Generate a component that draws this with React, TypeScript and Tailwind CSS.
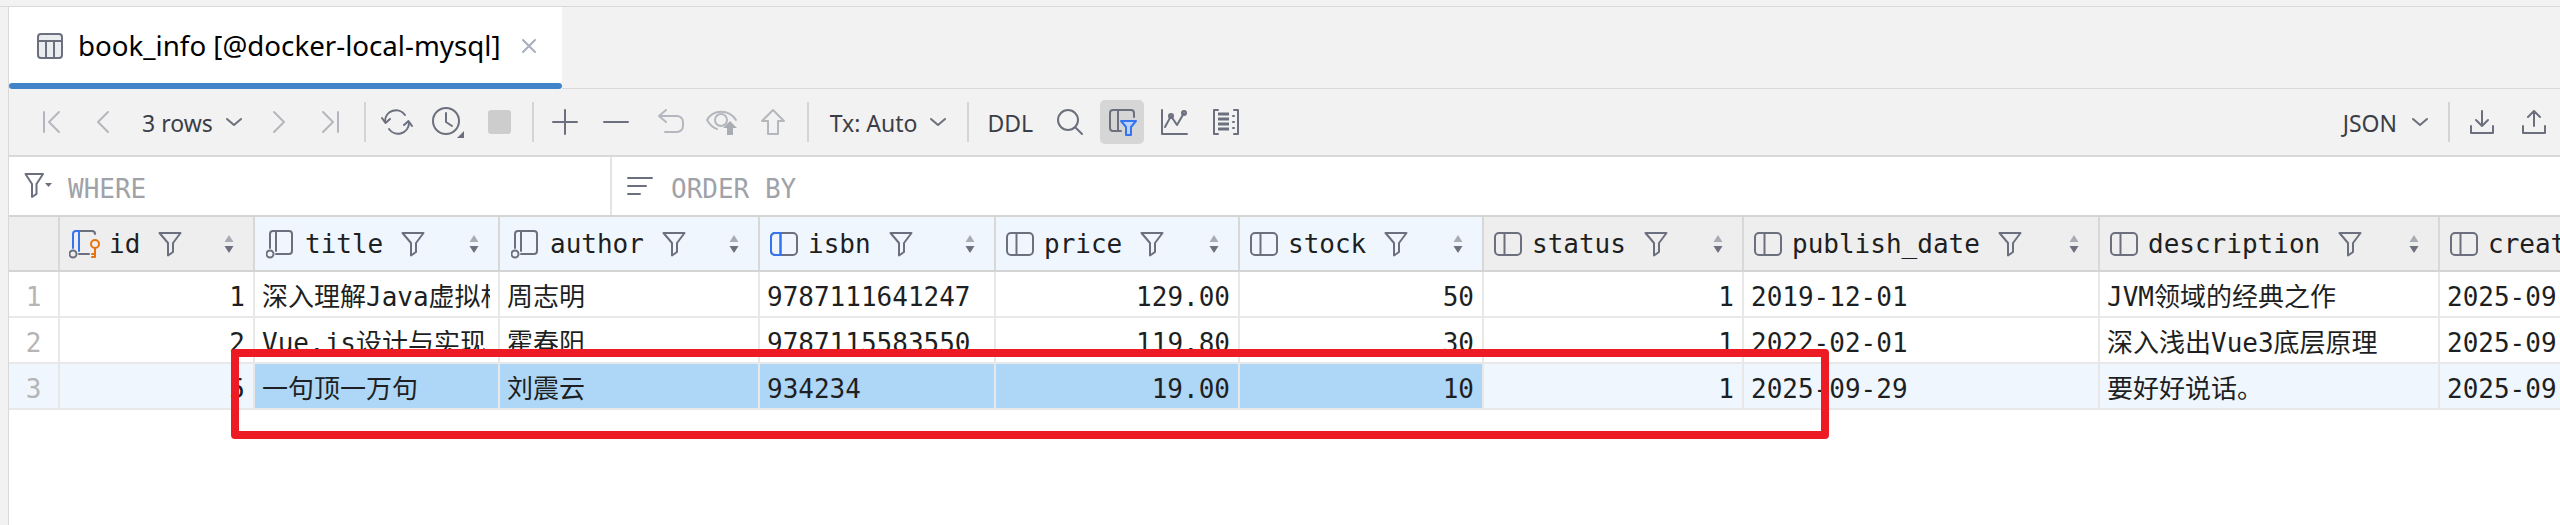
import React from 'react';

const G = '#6c707e';
const D = '#b4b7bd';
const mono = 'font-["DejaVu_Sans_Mono","Noto_Sans_CJK_SC",monospace]';

const Svg = ({ w = 28, h = 28, children }: { w?: number; h?: number; children: React.ReactNode }) => (
  <svg width={w} height={h} viewBox={`0 0 ${w} ${h}`} fill="none" strokeWidth={2} strokeLinecap="round" strokeLinejoin="round" className="shrink-0">
    {children}
  </svg>
);

const Btn = ({ children, cls = 'w-[51px]' }: { children: React.ReactNode; cls?: string }) => (
  <div className={`${cls} h-[44px] flex items-center justify-center shrink-0`}>{children}</div>
);
const Sep = ({ cls }: { cls: string }) => <div className={`w-[2px] h-[40px] bg-[#d4d4d4] shrink-0 ${cls}`} />;
const Chevron = ({ c = G }: { c?: string }) => (
  <Svg w={18} h={10}><path d="M2 2 L9 8 L16 2" stroke={c} /></Svg>
);
const TbText = ({ children, cls = '' }: { children: React.ReactNode; cls?: string }) => (
  <span className={`font-["Noto_Sans",sans-serif] text-[23px] leading-none text-[#3b3e46] whitespace-nowrap pt-[2px] ${cls}`}>{children}</span>
);

const FilterFunnel = () => (
  <Svg w={24} h={26}>
    <path d="M1.5 2 H22.5 L15 12 V21 L10 24.5 V12 Z" stroke={G} />
  </Svg>
);

const Sort = () => (
  <svg width={10} height={20} viewBox="0 0 10 20" className="shrink-0">
    <path d="M5 1 L9.5 8 H0.5 Z" fill="#a9acb3" />
    <path d="M5 19 L9.5 12 H0.5 Z" fill={G} />
  </svg>
);

const ColIcon = ({ kind }: { kind: string }) => {
  if (kind === 'plain' || kind === 'blue') {
    return (
      <Svg w={28} h={26}>
        <rect x={1} y={2} width={26} height={22} rx={4} stroke={G} />
        <path d="M10.5 2 V24" stroke={G} />
        {kind === 'blue' && <path d="M10.5 2 H5 a4 4 0 0 0 -4 4 V20 a4 4 0 0 0 4 4 H10.5 Z" stroke="#3574f0" />}
      </Svg>
    );
  }
  const left = kind === 'pk' ? '#3574f0' : G;
  return (
    <Svg w={kind === 'pk' ? 33 : 29} h={30}>
      <path d="M4 19 V5 a3 3 0 0 1 3 -3 H11" stroke={left} />
      <path d="M10 2 V22" stroke={left} />
      <path d="M11 2 H23 a3 3 0 0 1 3 3" stroke={G} />
      {kind !== 'pk' && <path d="M26 5 V22 a3 3 0 0 1 -3 3 H10" stroke={G} />}
      {kind === 'pk' && <path d="M10 25 H20" stroke={G} />}
      <circle cx={4} cy={25} r={3.5} stroke={G} />
      {kind === 'pk' && (
        <g stroke="#e8730c">
          <circle cx={26} cy={15} r={4} />
          <path d="M26 19 V28 M26 25 H23 M26 28 H23" />
        </g>
      )}
    </Svg>
  );
};

const cols = [
  { name: 'id', w: 'w-[195px]', icon: 'pk', hl: false, ic: 'ml-[9px]', tm: 'ml-[7px]' },
  { name: 'title', w: 'w-[245px]', icon: 'idx', hl: true, ic: 'ml-[11px]', tm: 'ml-[10px]' },
  { name: 'author', w: 'w-[260px]', icon: 'idx', hl: true, ic: 'ml-[11px]', tm: 'ml-[10px]' },
  { name: 'isbn', w: 'w-[236px]', icon: 'blue', hl: true, ic: 'ml-[10px]', tm: 'ml-[10px]' },
  { name: 'price', w: 'w-[244px]', icon: 'plain', hl: true, ic: 'ml-[10px]', tm: 'ml-[10px]' },
  { name: 'stock', w: 'w-[244px]', icon: 'plain', hl: true, ic: 'ml-[10px]', tm: 'ml-[10px]' },
  { name: 'status', w: 'w-[260px]', icon: 'plain', hl: false, ic: 'ml-[10px]', tm: 'ml-[10px]' },
  { name: 'publish_date', w: 'w-[356px]', icon: 'plain', hl: false, ic: 'ml-[10px]', tm: 'ml-[10px]' },
  { name: 'description', w: 'w-[340px]', icon: 'plain', hl: false, ic: 'ml-[10px]', tm: 'ml-[10px]' },
  { name: 'created_at', w: 'w-[340px]', icon: 'plain', hl: false, ic: 'ml-[10px]', tm: 'ml-[10px]' },
];

const rows = [
  ['1', '深入理解Java虚拟机（第3版）', '周志明', '9787111641247', '129.00', '50', '1', '2019-12-01', 'JVM领域的经典之作', '2025-09-29 10:00:00'],
  ['2', 'Vue.js设计与实现', '霍春阳', '9787115583550', '119.80', '30', '1', '2022-02-01', '深入浅出Vue3底层原理', '2025-09-29 10:00:00'],
  ['5', '一句顶一万句', '刘震云', '934234', '19.00', '10', '1', '2025-09-29', '要好好说话。', '2025-09-29 10:00:00'],
];
const rightAligned = [0, 4, 5, 6];

export default function App() {
  return (
    <div className="relative w-full h-[525px] overflow-hidden bg-white flex flex-col">
      <div className="h-[7px] shrink-0 bg-[#f2f2f2] border-b border-[#d9d9d9]" />
      <div className="flex flex-1 min-h-0">
        <div className="w-[9px] shrink-0 bg-[#f2f2f2] border-r border-[#d9d9d9]" />
        <div className="flex-1 min-w-0 flex flex-col">
          {/* tab bar */}
          <div className="h-[82px] shrink-0 flex bg-[#f2f2f2] border-b border-[#d9d9d9]">
            <div className="relative w-[553px] h-[82px] bg-white flex items-center pb-[4px]">
              <div className="ml-[28px] mr-[15px]">
                <Svg w={26} h={26}>
                  <rect x={1} y={1} width={24} height={24} rx={3} stroke={G} fill="#ebecf0" />
                  <path d="M1 8 H25 M9 8 V25 M17 8 V25" stroke={G} />
                </Svg>
              </div>
              <span className='font-["Noto_Sans",sans-serif] text-[27.7px] leading-none text-black whitespace-nowrap'>book_info [@docker-local-mysql]</span>
              <div className="ml-[21px]">
                <Svg w={16} h={16}><path d="M2 2 L14 14 M14 2 L2 14" stroke="#a8adbd" /></Svg>
              </div>
              <div className="absolute left-0 right-0 bottom-0 h-[6px] rounded-[3px] bg-[#4083c9]" />
            </div>
          </div>
          {/* toolbar */}
          <div className="h-[68px] shrink-0 flex items-center bg-[#f2f2f2] border-b-2 border-[#d9d9d9] pl-[17px]">
            <Btn><Svg w={20} h={26}><path d="M2 3 V23 M17 3 L7 13 L17 23" stroke={D} /></Svg></Btn>
            <Btn><Svg w={14} h={26}><path d="M12 3 L2 13 L12 23" stroke={D} /></Svg></Btn>
            <TbText cls="ml-[14px]">3 rows</TbText>
            <div className="ml-[12px] mr-[11px]"><Chevron /></div>
            <Btn><Svg w={14} h={26}><path d="M2 3 L12 13 L2 23" stroke={D} /></Svg></Btn>
            <Btn><Svg w={20} h={26}><path d="M18 3 V23 M3 3 L13 13 L3 23" stroke={D} /></Svg></Btn>
            <Sep cls="ml-[8px] mr-[6px]" />
            <Btn>
              <Svg w={32} h={30}>
                <path d="M4 14 A11 11 0 0 1 24 8" stroke={G} />
                <path d="M28 16 A11 11 0 0 1 8 22" stroke={G} />
                <path d="M1 11 L4.5 16 L9 12 M31 19 L27.5 14 L23 18" stroke={G} />
              </Svg>
            </Btn>
            <Btn>
              <Svg w={34} h={34}>
                <circle cx={15} cy={16} r={13} stroke={G} />
                <path d="M15 8 V17 L21 21" stroke={G} />
                <path d="M33 26 V33 H26 Z" fill={G} stroke="none" />
              </Svg>
            </Btn>
            <Btn><div className="w-[23px] h-[24px] rounded-[3px] bg-[#cdcdcd]" /></Btn>
            <Sep cls="ml-[7px] mr-[6px]" />
            <Btn><Svg w={28} h={28}><path d="M14 2 V26 M2 14 H26" stroke={G} /></Svg></Btn>
            <Btn><Svg w={28} h={28}><path d="M2 14 H26" stroke={G} /></Svg></Btn>
            <div className="w-[4px] shrink-0" />
            <Btn>
              <Svg w={28} h={28}>
                <path d="M9 2 L2 8 L9 14 M2 8 H20 a6 6 0 0 1 6 6 V18 a6 6 0 0 1 -6 6 H8" stroke={D} />
              </Svg>
            </Btn>
            <Btn>
              <Svg w={34} h={30}>
                <path d="M2 13 C8 2 24 2 31 13 M2 13 C5 18 8 21 12 22" stroke={D} />
                <circle cx={16} cy={13} r={6} stroke={D} />
                <path d="M25 14 L32 21 H28 V28 H22 V21 H18 Z" fill="#a9acb3" stroke="none" />
              </Svg>
            </Btn>
            <Btn>
              <Svg w={26} h={28}><path d="M13 2 L24 13 H18 V26 H8 V13 H2 Z" stroke={D} /></Svg>
            </Btn>
            <Sep cls="ml-[8px] mr-[21px]" />
            <TbText>Tx: Auto</TbText>
            <div className="ml-[11px]"><Chevron /></div>
            <Sep cls="ml-[20px] mr-[19px]" />
            <TbText>DDL</TbText>
            <div className="ml-[23px] mr-[16px]">
              <Svg w={28} h={28}>
                <circle cx={12} cy={12} r={10} stroke={G} />
                <path d="M19 19 L26 26" stroke={G} />
              </Svg>
            </div>
            <div className="w-[44px] h-[44px] rounded-[5px] bg-[#d6d6d6] flex items-center justify-center">
              <Svg w={30} h={30}>
                <path d="M14 24 H6 a3 3 0 0 1 -3 -3 V6 a3 3 0 0 1 3 -3 H24 a3 3 0 0 1 3 3 V10 M11 3 V24" stroke={G} />
                <path d="M14 14 H29 L24 20 V28 H19 V20 Z" fill="#bcd2fb" stroke="#3574f0" />
              </Svg>
            </div>
            <div className="ml-[16px] mr-[24px]">
              <Svg w={28} h={28}>
                <path d="M2 2 V26 H27" stroke={G} />
                <path d="M5 19 L11 8 L17 17 L24 5" stroke={G} />
                <circle cx={11} cy={8} r={2} stroke={G} />
                <circle cx={24} cy={5} r={2} stroke={G} />
              </Svg>
            </div>
            <Svg w={28} h={28}>
              <path d="M6 2 H2 V26 H6 M22 2 H26 V26 H22" stroke={G} />
              <path d="M6 6 H17 M6 11 H17 M6 16 H17 M6 21 H17" stroke={G} strokeWidth={3} strokeLinecap="butt" />
              <path d="M21 8 H22 M21 14 H22 M21 20 H22" stroke={G} />
            </Svg>
            <div className="ml-auto flex items-center">
              <TbText>JSON</TbText>
              <div className="ml-[14px]"><Chevron /></div>
              <Sep cls="ml-[19px] mr-[19px]" />
              <Svg w={26} h={26}>
                <path d="M13 2 V17 M7 11 L13 17 L19 11 M2 17 V24 H24 V17" stroke={G} />
              </Svg>
              <div className="w-[26px]" />
              <div className="mr-[13px]">
                <Svg w={26} h={26}>
                  <path d="M13 17 V2 M7 8 L13 2 L19 8 M2 17 V24 H24 V17" stroke={G} />
                </Svg>
              </div>
            </div>
          </div>
          {/* where / order by */}
          <div className={`h-[58px] shrink-0 flex ${mono} text-[26px] leading-none text-[#9fa2a8]`}>
            <div className="w-[603px] shrink-0 flex items-center border-r-2 border-[#e4e4e4] pl-[15px]">
              <Svg w={30} h={28}>
                <path d="M1.5 2 H19 L12.5 12 V22 L8 25 V12 Z" stroke={G} />
                <path d="M21 11 H28 L24.5 15 Z" fill={G} stroke="none" />
              </Svg>
              <span className="ml-[14px] pt-[5px]">WHERE</span>
            </div>
            <div className="flex items-center pl-[14px]">
              <Svg w={28} h={26}>
                <path d="M2 5 H26 M2 13 H20 M2 21 H14" stroke={G} />
              </Svg>
              <span className="ml-[17px] pt-[5px] whitespace-nowrap">ORDER BY</span>
            </div>
          </div>
          {/* header */}
          <div className={`h-[57px] shrink-0 flex border-y-2 border-[#d4d4d4] ${mono} text-[26px] leading-none text-[#1e1f22]`}>
            <div className="w-[51px] shrink-0 bg-[#eeeeee] border-r-2 border-[#d8d8d8]" />
            {cols.map((c) => (
              <div key={c.name} className={`${c.w} shrink-0 flex items-center border-r-2 border-[#d8d8d8] overflow-hidden ${c.hl ? 'bg-[#f0f6fe]' : 'bg-[#eeeeee]'}`}>
                <div className={`${c.ic} flex items-center`}><ColIcon kind={c.icon} /></div>
                <span className={`whitespace-nowrap pt-[1px] ${c.tm}`}>{c.name}</span>
                <div className="ml-[18px]"><FilterFunnel /></div>
                <div className="ml-auto mr-[19px]"><Sort /></div>
              </div>
            ))}
          </div>
          {/* rows */}
          {rows.map((r, i) => (
            <div key={i} className={`h-[46px] shrink-0 flex border-b-2 border-[#e8e8e8] ${mono} text-[26px] leading-none text-[#1e1f22] ${i === 2 ? 'bg-[#eff6fe]' : 'bg-white'}`}>
              <div className="w-[51px] shrink-0 border-r-2 border-[#e8e8e8] flex items-center justify-center text-[#b5b5b5] pt-[5px]">{i + 1}</div>
              {cols.map((c, j) => {
                const sel = i === 2 && j >= 1 && j <= 5;
                return (
                  <div key={c.name} className={`${c.w} shrink-0 border-r-2 border-[#e8e8e8] flex items-center pl-[7px] pr-[8px] pt-[5px] ${sel ? 'bg-[#aed7f7]' : ''} ${rightAligned.includes(j) ? 'justify-end' : ''}`}>
                    <div className="overflow-hidden whitespace-nowrap">{r[j]}</div>
                  </div>
                );
              })}
            </div>
          ))}
        </div>
      </div>
      {/* red annotation */}
      <div className="absolute left-[231px] top-[349px] w-[1598px] h-[90px] border-[8px] border-[#ed1c24] rounded-[4px] pointer-events-none" />
    </div>
  );
}
